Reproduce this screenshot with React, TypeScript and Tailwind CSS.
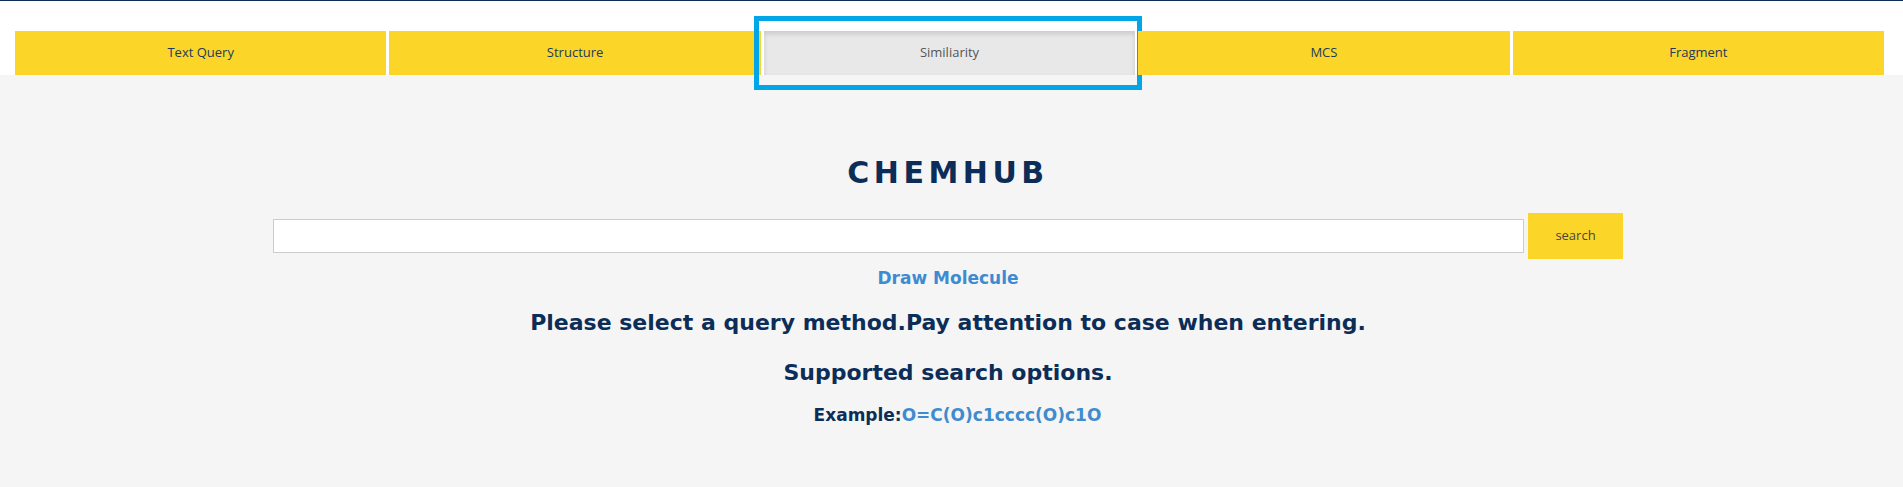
import React, { useState } from 'react';

const tabs = ['Text Query', 'Structure', 'Similiarity', 'MCS', 'Fragment'];

export default function App() {
  const [active, setActive] = useState('Similiarity');
  const [query, setQuery] = useState('');

  return (
    <div className="min-h-screen bg-[#f5f5f5] font-['Open_Sans',sans-serif]">
      <div className="border-t border-[#0b2d55] bg-white pl-[15px] pr-[19px] pt-[30px]">
        <div className="flex gap-[3px]">
          {tabs.map((tab) => {
            const selected = tab === active;
            return (
              <button
                key={tab}
                onClick={() => setActive(tab)}
                className={
                  selected
                    ? 'relative flex h-[44px] flex-1 items-center justify-center bg-[#e8e8e8] text-[13px] text-[#555] shadow-[inset_0_3px_5px_rgba(0,0,0,0.13)]'
                    : 'relative flex h-[44px] flex-1 items-center justify-center bg-[#fcd529] text-[13px] text-[#1d3a5f]'
                }
              >
                {tab}
                {selected && (
                  <span className="pointer-events-none absolute -top-[15px] -right-[7px] -bottom-[15px] -left-[10px] border-[5px] border-[#02a6e6]" />
                )}
              </button>
            );
          })}
        </div>
      </div>

      <div className="flex flex-col items-center pr-[7px] pt-[80px] font-['DejaVu_Sans',sans-serif]">
        <h1 className="text-[30px] leading-[36px] font-bold tracking-[4.5px] text-[#0c2d57]">CHEMHUB</h1>

        <div className="mt-[22px] flex items-center gap-[4px]">
          <input
            value={query}
            onChange={(e) => setQuery(e.target.value)}
            className="h-[34px] w-[1251px] border border-[#ccc] bg-white px-2 text-[14px] outline-none"
          />
          <button className="h-[46px] w-[95px] bg-[#fcd529] font-['Open_Sans',sans-serif] text-[13px] text-[#444]">
            search
          </button>
        </div>

        <a href="#" className="mt-[7px] text-[17px] leading-[24px] font-bold text-[#3f8bd0]">
          Draw Molecule
        </a>

        <p className="mt-[18px] text-[22px] leading-[30px] font-bold text-[#0c2d57]">
          Please select a query method.Pay attention to case when entering.
        </p>
        <p className="mt-[20px] text-[22px] leading-[30px] font-bold text-[#0c2d57]">Supported search options.</p>
        <p className="mt-[15px] ml-[19px] text-[17px] leading-[24px] font-bold text-[#0c2d57]">
          Example:<span className="text-[#3f8bd0]">O=C(O)c1cccc(O)c1O</span>
        </p>
      </div>
    </div>
  );
}
